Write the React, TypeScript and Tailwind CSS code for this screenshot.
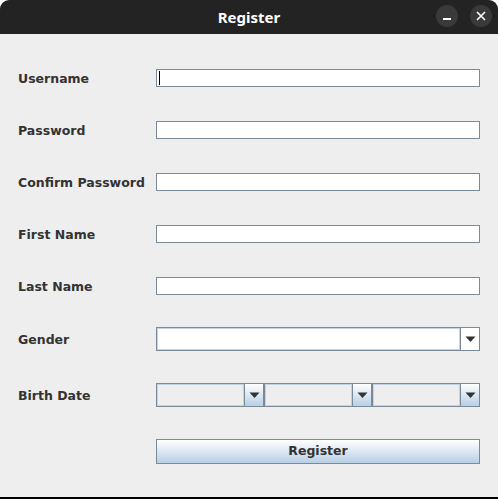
import React from "react";

const labelCls =
  "w-[156px] shrink-0 pl-[18px] text-[12.5px] font-bold text-[#333333] leading-none whitespace-nowrap pt-[2px]";

function TextField({ caret }: { caret?: boolean }) {
  return (
    <div className="w-[324px] h-[18px] border border-[#7a8a99] bg-white flex items-center pl-[2px]">
      {caret && <div className="w-px h-[14px] bg-black" />}
    </div>
  );
}

function Arrow() {
  return (
    <svg width="11" height="7" viewBox="0 0 11 7">
      <path d="M0.5 0.5 H10.5 L5.5 6 Z" fill="#333333" />
    </svg>
  );
}

function Combo({ width, white }: { width: number; white?: boolean }) {
  return (
    <div
      className="h-[24px] border border-[#7a8a99] flex"
      style={{ width }}
    >
      <div
        className={
          "flex-1 border border-[#c3d3e3] " + (white ? "bg-white" : "bg-[#eeeeee]")
        }
      />
      <div
        className={
          "w-[19px] border-l border-[#7a8a99] flex items-center justify-center " +
          (white ? "bg-white" : "bg-gradient-to-b from-[#ffffff] to-[#b8cfe5]")
        }
      >
        <Arrow />
      </div>
    </div>
  );
}

export default function App() {
  return (
    <div
      className="w-[498px] h-[499px] bg-white flex flex-col"
      style={{ fontFamily: '"DejaVu Sans", sans-serif' }}
    >
      <div className="h-[34px] bg-[#232323] rounded-t-[9px] flex items-center justify-center relative">
        <span
          className="text-white text-[15px] font-bold"
          style={{ fontFamily: '"Noto Sans", sans-serif' }}
        >
          Register
        </span>
        <div className="absolute right-[6px] top-[5px] flex gap-[12px]">
          <div className="w-[22px] h-[22px] rounded-full bg-[#3a3a3a] flex items-center justify-center">
            <div className="w-[8px] h-[1.5px] bg-white mt-[6px]" />
          </div>
          <div className="w-[22px] h-[22px] rounded-full bg-[#3a3a3a] flex items-center justify-center">
            <svg width="10" height="10" viewBox="0 0 10 10">
              <path d="M1 1 L9 9 M9 1 L1 9" stroke="white" strokeWidth="1.6" />
            </svg>
          </div>
        </div>
      </div>
      <div className="flex-1 bg-[#eeeeee] flex flex-col pt-[35px] border-b-2 border-black">
        <div className="flex items-center h-[18px]">
          <div className={labelCls}>Username</div>
          <TextField caret />
        </div>
        <div className="flex items-center h-[18px] mt-[34px]">
          <div className={labelCls}>Password</div>
          <TextField />
        </div>
        <div className="flex items-center h-[18px] mt-[34px]">
          <div className={labelCls}>Confirm Password</div>
          <TextField />
        </div>
        <div className="flex items-center h-[18px] mt-[34px]">
          <div className={labelCls}>First Name</div>
          <TextField />
        </div>
        <div className="flex items-center h-[18px] mt-[34px]">
          <div className={labelCls}>Last Name</div>
          <TextField />
        </div>
        <div className="flex items-center h-[24px] mt-[32px]">
          <div className={labelCls}>Gender</div>
          <Combo width={324} white />
        </div>
        <div className="flex items-center h-[24px] mt-[32px]">
          <div className={labelCls}>Birth Date</div>
          <div className="flex">
            <Combo width={108} />
            <Combo width={108} />
            <Combo width={108} />
          </div>
        </div>
        <div className="flex items-center h-[25px] mt-[32px]">
          <div className="w-[156px] shrink-0" />
          <button className="w-[324px] h-[25px] border border-[#7a8a99] bg-gradient-to-b from-[#ffffff] to-[#b8cfe5] text-[12.5px] font-bold text-[#333333] leading-none">
            Register
          </button>
        </div>
      </div>
    </div>
  );
}
